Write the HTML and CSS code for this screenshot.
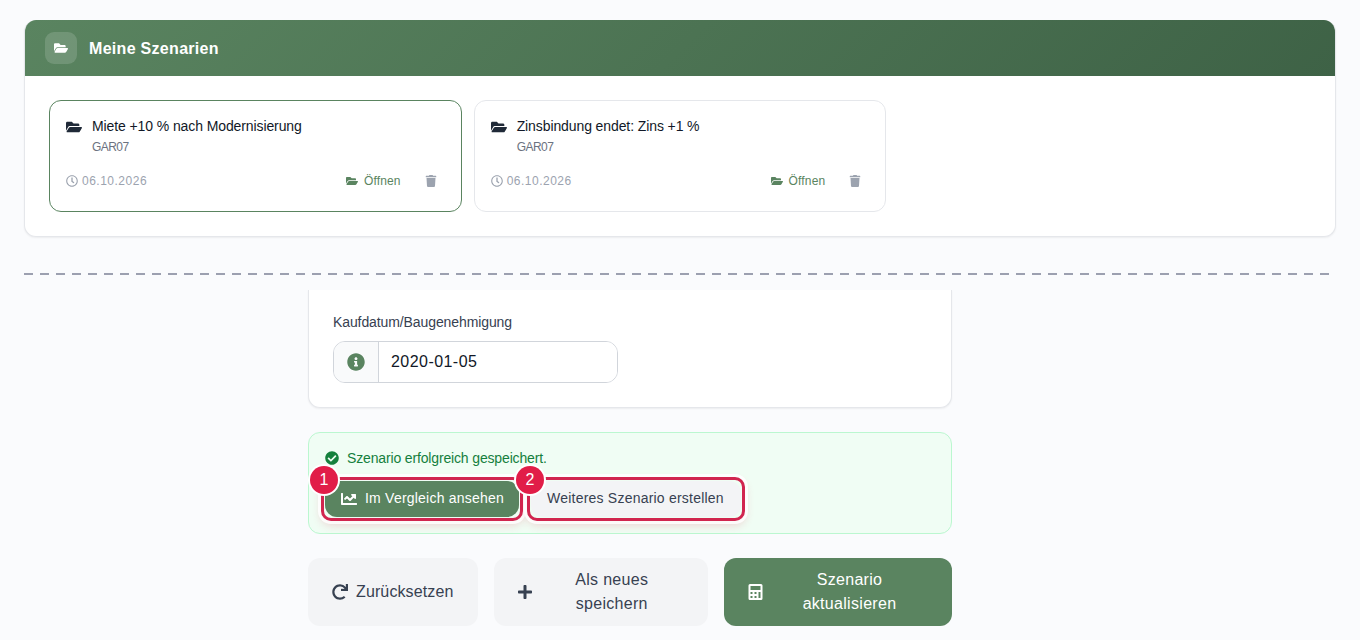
FILE: index.html
```html
<!DOCTYPE html>
<html lang="de">
<head>
    <meta charset="utf-8" />
    <title>Meine Szenarien</title>
    <link rel="stylesheet" href="styles.css">
</head>
<body>
    <svg class="sprite" aria-hidden="true">
        <symbol id="folder" viewBox="0 0 576 512"><path d="M572.694 292.093L500.27 416.248A63.997 63.997 0 0 1 444.989 448H45.025c-18.523 0-30.064-20.093-20.731-36.093l72.424-124.155A64 64 0 0 1 152 256h399.964c18.523 0 30.064 20.093 20.73 36.093zM152 224h328v-48c0-26.51-21.49-48-48-48H272l-64-64H48C21.49 64 0 85.49 0 112v278.046l69.077-118.418C86.214 242.25 117.989 224 152 224z"/></symbol>
        <symbol id="clock" viewBox="0 0 512 512"><path d="M256 8C119 8 8 119 8 256s111 248 248 248 248-111 248-248S393 8 256 8zm0 448c-110.5 0-200-89.5-200-200S145.5 56 256 56s200 89.5 200 200-89.5 200-200 200zm61.800-104.400l-84.900-61.700c-3.100-2.300-4.900-5.900-4.900-9.700V116c0-6.600 5.400-12 12-12h32c6.600 0 12 5.400 12 12v141.700l66.800 48.600c5.400 3.900 6.500 11.400 2.600 16.800L334.600 349c-3.900 5.300-11.400 6.500-16.800 2.600z"/></symbol>
        <symbol id="trash" viewBox="0 0 448 512"><path d="M432 32H312l-9.400-18.700A24 24 0 0 0 281.100 0H166.800a23.720 23.720 0 0 0-21.400 13.300L136 32H16A16 16 0 0 0 0 48v32a16 16 0 0 0 16 16h416a16 16 0 0 0 16-16V48a16 16 0 0 0-16-16zM53.200 467a48 48 0 0 0 47.900 45h245.800a48 48 0 0 0 47.900-45L416 128H32z"/></symbol>
        <symbol id="info" viewBox="0 0 512 512"><path d="M256 8C119.043 8 8 119.083 8 256c0 136.997 111.043 248 248 248s248-111.003 248-248C504 119.083 392.957 8 256 8zm0 110c23.196 0 42 18.804 42 42s-18.804 42-42 42-42-18.804-42-42 18.804-42 42-42zm56 254c0 6.627-5.373 12-12 12h-88c-6.627 0-12-5.373-12-12v-24c0-6.627 5.373-12 12-12h12v-64h-12c-6.627 0-12-5.373-12-12v-24c0-6.627 5.373-12 12-12h64c6.627 0 12 5.373 12 12v100h12c6.627 0 12 5.373 12 12v24z"/></symbol>
        <symbol id="check" viewBox="0 0 512 512"><path d="M504 256c0 136.967-111.033 248-248 248S8 392.967 8 256 119.033 8 256 8s248 111.033 248 248zM227.314 387.314l184-184c6.248-6.248 6.248-16.379 0-22.627l-22.627-22.627c-6.248-6.249-16.379-6.249-22.628 0L216 308.118l-70.059-70.059c-6.248-6.248-16.379-6.248-22.628 0l-22.627 22.627c-6.248 6.248-6.248 16.379 0 22.627l104 104c6.249 6.249 16.379 6.249 22.628.001z"/></symbol>
        <symbol id="chart" viewBox="0 0 512 512"><path d="M496 384H64V80c0-8.840-7.160-16-16-16H16C7.160 64 0 71.160 0 80v336c0 17.670 14.330 32 32 32h464c8.840 0 16-7.160 16-16v-32c0-8.840-7.160-16-16-16zM464 96H345.940c-21.380 0-32.090 25.850-16.970 40.970l32.400 32.400L288 242.750l-73.370-73.370c-12.500-12.500-32.760-12.500-45.250 0l-68.690 68.690c-6.250 6.250-6.250 16.380 0 22.630l22.620 22.620c6.250 6.250 16.380 6.250 22.630 0L192 237.250l73.370 73.370c12.500 12.500 32.760 12.500 45.250 0l96-96 32.400 32.400c15.120 15.120 40.970 4.410 40.970-16.970V112c.01-8.840-7.150-16-15.990-16z"/></symbol>
        <symbol id="redo" viewBox="0 0 512 512"><path d="M500.330 0h-47.410a12 12 0 0 0-12 12.570l4 82.760A247.420 247.420 0 0 0 256 8C119.340 8 7.900 119.530 8 256.190 8.100 393.070 119.100 504 256 504a247.100 247.100 0 0 0 166.180-63.910 12 12 0 0 0 .48-17.430l-34-34a12 12 0 0 0-16.380-.55A176 176 0 1 1 402.100 157.800l-101.530-4.870a12 12 0 0 0-12.570 12v47.410a12 12 0 0 0 12 12h200.330a12 12 0 0 0 12-12V12a12 12 0 0 0-12-12z"/></symbol>
        <symbol id="plus" viewBox="0 0 448 512"><path d="M416 208H272V64c0-17.670-14.330-32-32-32h-32c-17.670 0-32 14.330-32 32v144H32c-17.670 0-32 14.330-32 32v32c0 17.670 14.330 32 32 32h144v144c0 17.670 14.330 32 32 32h32c17.670 0 32-14.330 32-32V304h144c17.670 0 32-14.330 32-32v-32c0-17.670-14.330-32-32-32z"/></symbol>
        <symbol id="calculator" viewBox="0 0 448 512"><path fill-rule="evenodd" d="M48 0H400Q448 0 448 48V464Q448 512 400 512H48Q0 512 0 464V48Q0 0 48 0ZM64 64V192H384V64ZM64 256V320H128V256ZM192 256V320H256V256ZM320 256V448H384V256ZM64 384V448H128V384ZM192 384V448H256V384Z"/></symbol>
    </svg>

    <div class="scenarios">
        <div class="scenarios-header">
            <div class="header-icon"><svg class="icon-14"><use href="#folder"/></svg></div>
            <h2>Meine Szenarien</h2>
        </div>
        <div class="scenario-grid">
            <div class="scenario active">
                <div class="scenario-top">
                    <svg class="icon-16"><use href="#folder"/></svg>
                    <div>
                        <p class="scenario-name">Miete +10 % nach Modernisierung</p>
                        <p class="scenario-object">GAR07</p>
                    </div>
                </div>
                <div class="scenario-bottom">
                    <span class="date"><svg class="icon-12"><use href="#clock"/></svg><span>06.10.2026</span></span>
                    <span class="actions">
                        <a class="open-link"><svg class="icon-12"><use href="#folder"/></svg><span>Öffnen</span></a>
                        <svg class="icon-12 trash"><use href="#trash"/></svg>
                    </span>
                </div>
            </div>
            <div class="scenario">
                <div class="scenario-top">
                    <svg class="icon-16"><use href="#folder"/></svg>
                    <div>
                        <p class="scenario-name">Zinsbindung endet: Zins +1 %</p>
                        <p class="scenario-object">GAR07</p>
                    </div>
                </div>
                <div class="scenario-bottom">
                    <span class="date"><svg class="icon-12"><use href="#clock"/></svg><span>06.10.2026</span></span>
                    <span class="actions">
                        <a class="open-link"><svg class="icon-12"><use href="#folder"/></svg><span>Öffnen</span></a>
                        <svg class="icon-12 trash"><use href="#trash"/></svg>
                    </span>
                </div>
            </div>
        </div>
    </div>

    <div class="divider"></div>

    <div class="form">
        <div class="form-card">
            <label class="date-label" for="kaufdatum">Kaufdatum/Baugenehmigung</label>
            <div class="input-group">
                <div class="input-info"><svg class="icon-18"><use href="#info"/></svg></div>
                <input type="text" id="kaufdatum" class="date-input" value="2020-01-05" />
            </div>
        </div>

        <div class="saved">
            <div class="saved-message"><svg class="icon-14"><use href="#check"/></svg><span>Szenario erfolgreich gespeichert.</span></div>
            <div class="saved-actions">
                <div class="marked">
                    <button class="small-button primary compare"><svg class="icon-16"><use href="#chart"/></svg><span>Im Vergleich ansehen</span></button>
                    <span class="marker">1</span>
                </div>
                <div class="marked">
                    <button class="small-button another"><span>Weiteres Szenario erstellen</span></button>
                    <span class="marker">2</span>
                </div>
            </div>
        </div>

        <div class="form-buttons">
            <button class="button reset"><svg class="icon-16"><use href="#redo"/></svg><span>Zurücksetzen</span></button>
            <button class="button"><svg class="icon-plus"><use href="#plus"/></svg><span class="button-text">Als neues<br>speichern</span></button>
            <button class="button primary"><svg class="icon-calc"><use href="#calculator"/></svg><span class="button-text">Szenario<br>aktualisieren</span></button>
        </div>
    </div>
</body>
</html>
```
FILE: styles.css
```css
* {
    box-sizing: border-box;
}

body {
    margin: 0;
    height: 640px;
    padding: 20px 24px 0;
    overflow: hidden;
    background-color: #fafbfd;
    font-family: "Liberation Sans", Arial, sans-serif;
    color: #1f2937;
}

p, h2 {
    margin: 0;
}

svg {
    fill: currentColor;
    flex: none;
}

.sprite {
    display: none;
}

.icon-12 { width: 12px; height: 12px; }
.icon-14 { width: 14px; height: 14px; }
.icon-16 { width: 16px; height: 16px; }
.icon-18 { width: 18px; height: 18px; }
.icon-plus { width: 14px; height: 16px; }
.icon-calc { width: 15px; height: 16px; }

.scenarios {
    height: 217px;
    background-color: white;
    border: 1px solid #e5e7eb;
    border-top: 0;
    border-radius: 12px;
    box-shadow: 0 1px 2px rgba(0, 0, 0, 0.06);
    overflow: hidden;
}

.scenarios-header {
    display: flex;
    align-items: center;
    gap: 12px;
    height: 56px;
    padding: 0 20px;
    color: white;
    background: linear-gradient(135deg, #5a8460, #3e6246);
}

.header-icon {
    display: flex;
    align-items: center;
    justify-content: center;
    width: 32px;
    height: 32px;
    border-radius: 9px;
    background-color: rgba(255, 255, 255, 0.15);
}

h2 {
    font-size: 16px;
    line-height: 24px;
    font-weight: 600;
    letter-spacing: 0.3px;
    padding-top: 1px;
}

.scenario-grid {
    display: grid;
    grid-template-columns: repeat(3, 1fr);
    gap: 12px;
    padding: 24px;
}

.scenario {
    height: 112px;
    padding: 16px;
    border: 1px solid #e5e7eb;
    border-radius: 12px;
}

    .scenario.active {
        border-color: #5a8460;
    }

.scenario-top {
    display: flex;
    gap: 10px;
}

    .scenario-top svg {
        margin-top: 2px;
    }

.scenario-name {
    font-size: 14px;
    line-height: 18px;
    letter-spacing: -0.1px;
    color: #111827;
}

.scenario-object {
    font-size: 12px;
    line-height: 16px;
    margin-top: 4px;
    letter-spacing: -0.55px;
    color: #6b7280;
}

.scenario-bottom {
    display: flex;
    justify-content: space-between;
    align-items: center;
    height: 32px;
    margin-top: 10px;
    font-size: 12px;
}

.date {
    display: flex;
    align-items: center;
    gap: 4px;
    color: #9ca3af;
    letter-spacing: 0.5px;
}

.actions {
    display: flex;
    align-items: center;
    gap: 24px;
    padding-right: 8px;
}

.open-link {
    display: flex;
    align-items: center;
    gap: 6px;
    color: #5a8460;
    letter-spacing: 0.15px;
}

.trash {
    color: #9ca3af;
}

.divider {
    height: 2px;
    margin-top: 36px;
    background: repeating-linear-gradient(90deg, #9ca0b0 0 9px, transparent 9px 16px);
}

.form {
    width: 644px;
    margin: 15px 0 0 284px;
}

.form-card {
    height: 118px;
    padding: 22px 24px 0;
    background-color: white;
    border: 1px solid #e5e7eb;
    border-top: 0;
    border-radius: 0 0 12px 12px;
    box-shadow: 0 1px 2px rgba(0, 0, 0, 0.06);
}

.date-label {
    display: block;
    font-size: 14px;
    line-height: 20px;
    letter-spacing: -0.1px;
    color: #374151;
}

.input-group {
    display: flex;
    width: 285px;
    height: 42px;
    margin-top: 9px;
    border: 1px solid #d1d5db;
    border-radius: 12px;
    overflow: hidden;
}

.input-info {
    display: flex;
    align-items: center;
    justify-content: center;
    width: 45px;
    background-color: #f9fafb;
    border-right: 1px solid #d1d5db;
    color: #5a8460;
}

.date-input {
    flex: 1;
    min-width: 0;
    padding: 0 12px;
    border: 0;
    font-family: inherit;
    font-size: 16px;
    letter-spacing: 0.45px;
    color: #111827;
}

.saved {
    height: 102px;
    margin-top: 24px;
    padding: 16px;
    background-color: #f0fdf4;
    border: 1px solid #bbf7d0;
    border-radius: 12px;
}

.saved-message {
    display: flex;
    align-items: center;
    gap: 8px;
    height: 20px;
    font-size: 14px;
    line-height: 20px;
    letter-spacing: -0.15px;
    color: #15803d;
}

    .saved-message svg {
        margin-bottom: 2px;
    }

    .saved-message span {
        padding-bottom: 2px;
    }

.saved-actions {
    display: flex;
    gap: 12px;
    margin-top: 12px;
}

.marked {
    position: relative;
}

    /* numbered frame around the button */
    .marked::after {
        content: "";
        position: absolute;
        inset: -4px;
        border: 3px solid #d1254f;
        border-radius: 10px;
        box-shadow: 0 0 0 3px rgba(255, 255, 255, 0.85), 0 4px 10px rgba(225, 29, 72, 0.2);
    }

.marker {
    position: absolute;
    z-index: 2;
    top: -15px;
    left: -15px;
    width: 28px;
    height: 28px;
    border-radius: 50%;
    background-color: #e11d48;
    box-shadow: 0 0 0 2px white;
    color: white;
    font-size: 16px;
    line-height: 28px;
    text-align: center;
}

.small-button, .button {
    display: flex;
    align-items: center;
    border: 0;
    border-radius: 12px;
    background-color: #f3f4f6;
    color: #374151;
    font-family: inherit;
}

.small-button {
    height: 36px;
    padding: 0 16px;
    gap: 8px;
    font-size: 14px;
    letter-spacing: 0.22px;
    white-space: nowrap;
}

    .small-button span {
        padding-bottom: 2px;
    }

.compare {
    width: 194px;
}

.another {
    width: 210px;
}

.form-buttons {
    display: grid;
    grid-template-columns: 169.5px 214.5px 228px;
    gap: 16px;
    margin-top: 24px;
}

.button {
    height: 68px;
    padding: 0 24px;
    gap: 8px;
    font-size: 16px;
    line-height: 24px;
    letter-spacing: 0.3px;
}

.reset {
    letter-spacing: 0.12px;
}

.button-text {
    flex: 1;
    text-align: center;
}

/* after the button rules, it overrides their grey */
.primary {
    background-color: #5a8460;
    color: white;
}
```
